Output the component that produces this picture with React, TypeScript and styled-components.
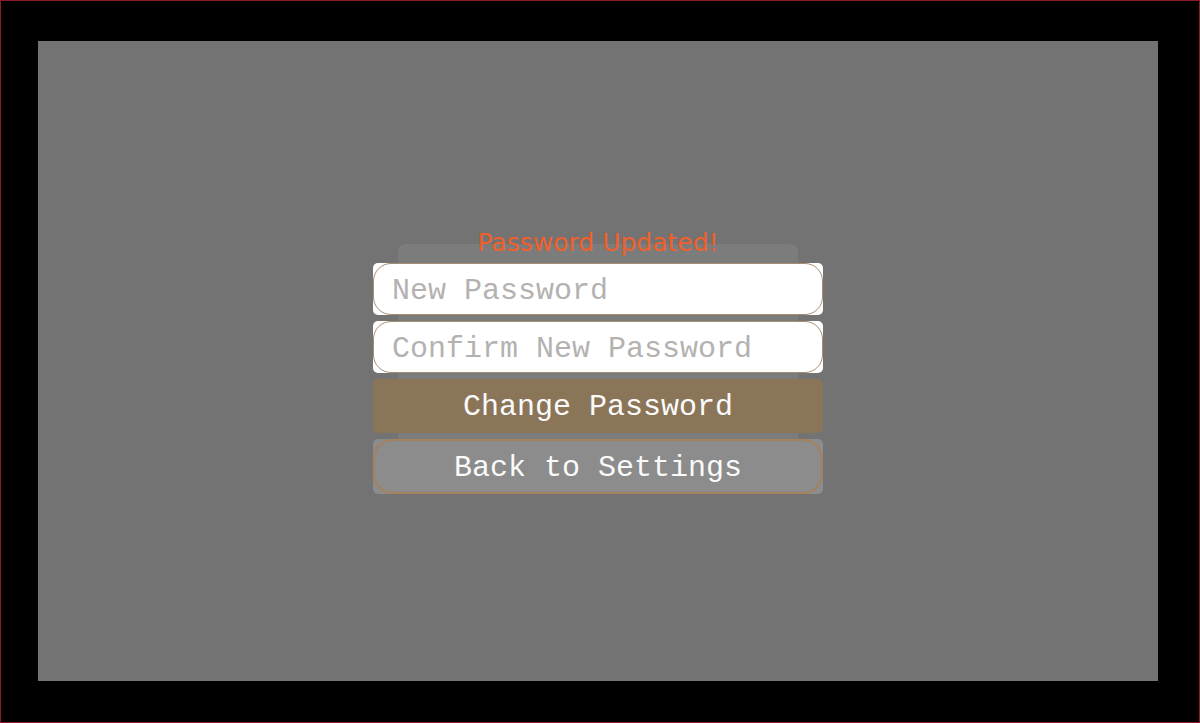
import React from "react";
import styled, { createGlobalStyle } from "styled-components";

const Global = createGlobalStyle`
  html, body { margin: 0; padding: 0; background: #000; }
  * { box-sizing: border-box; }
`;

const MONO = `"Courier New", Courier, "Liberation Mono", monospace`;

const Frame = styled.div`
  width: 1200px;
  height: 723px;
  border: 1px solid #8c1b27;
  background: #000;
  padding: 40px 0 0 37px;
`;

const Panel = styled.div`
  width: 1120px;
  height: 640px;
  background: #727372;
  display: flex;
  align-items: center;
  justify-content: center;
`;

const Card = styled.div`
  width: 400px;
  margin-top: 15px;
  background: #7b7c7b;
  border-radius: 8px;
  display: flex;
  flex-direction: column;
  gap: 6px;
`;

const Title = styled.h2`
  margin: -15px 0 0;
  font-family: "DejaVu Sans", Verdana, sans-serif;
  font-weight: normal;
  font-size: 25px;
  line-height: 28px;
  color: #f0602c;
  text-align: center;
`;

const Shell = styled.div<{ $h: number; $bg: string }>`
  margin: 0 -25px;
  height: ${(p) => p.$h}px;
  background: ${(p) => p.$bg};
  border-radius: 5px;
  display: flex;
`;

const Field = styled.input`
  flex: 1;
  min-width: 0;
  height: 100%;
  border: 1px solid #a58c72;
  border-radius: 18px;
  background: transparent;
  padding: 4px 18px 0;
  font-family: ${MONO};
  font-size: 30px;
  color: #333;
  outline: none;
  &::placeholder {
    color: #b4b2b0;
  }
`;

const Button = styled.button<{ $outlined?: boolean }>`
  flex: 1;
  height: 100%;
  border: ${(p) => (p.$outlined ? "2px solid #a3825d" : "none")};
  border-radius: ${(p) => (p.$outlined ? "20px" : "5px")};
  background: transparent;
  color: #fafafa;
  font-family: ${MONO};
  font-size: 30px;
  padding: 3px 0 0;
  cursor: pointer;
`;

export default function App() {
  return (
    <>
      <Global />
      <Frame>
        <Panel>
          <Card>
            <Title>Password Updated!</Title>
            <Shell $h={52} $bg="#ffffff">
              <Field type="password" placeholder="New Password" />
            </Shell>
            <Shell $h={52} $bg="#ffffff">
              <Field type="password" placeholder="Confirm New Password" />
            </Shell>
            <Shell $h={54} $bg="#8b7558">
              <Button>Change Password</Button>
            </Shell>
            <Shell $h={55} $bg="#8b8c8b">
              <Button $outlined>Back to Settings</Button>
            </Shell>
          </Card>
        </Panel>
      </Frame>
    </>
  );
}
